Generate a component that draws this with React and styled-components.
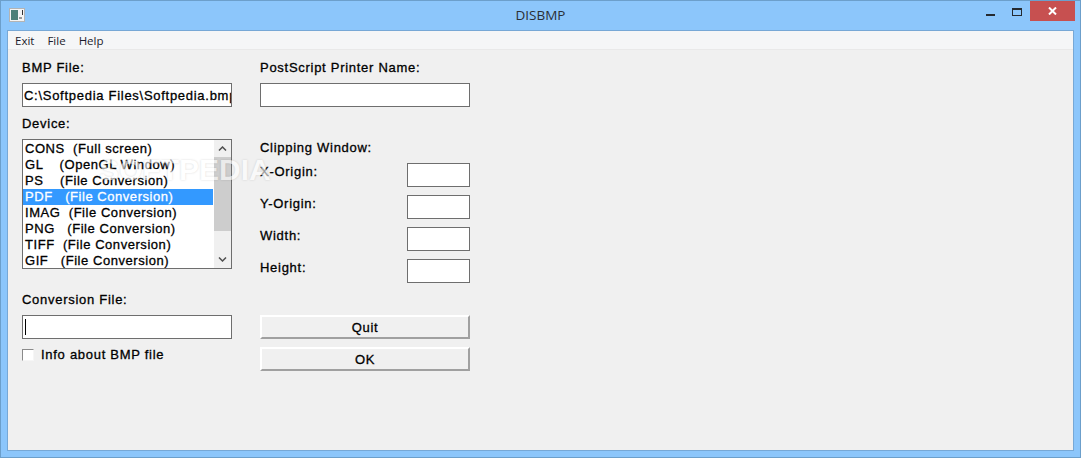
import styled, { createGlobalStyle } from 'styled-components';

const Global = createGlobalStyle`
  html, body { margin: 0; padding: 0; overflow: hidden; }
`;

const Frame = styled.div`
  box-sizing: border-box;
  width: 1081px;
  height: 458px;
  background: #8cc6fb;
  border: 1px solid #6c9fcb;
  display: flex;
  flex-direction: column;
  padding: 0 6px 6px 6px;
`;

const TitleBar = styled.div`
  height: 29px;
  flex: none;
  display: grid;
  grid-template-columns: 1fr auto 1fr;
  align-items: start;
`;

const AppIcon = styled.svg`
  display: block;
  margin: 7px 0 0 2px;
`;

const Title = styled.div`
  font: 13.5px/29px "Open Sans", "Noto Sans", sans-serif;
  color: #2b2f36;
`;

const Controls = styled.div`
  display: flex;
  justify-content: flex-end;
  align-items: flex-start;
  margin-right: -1px;
`;

const ControlIcon = styled.svg`
  display: block;
  margin-top: ${p => p.$top}px;
  margin-right: ${p => p.$right}px;
`;

const CloseButton = styled.div`
  width: 45px;
  height: 20px;
  background: #c75050;
  display: flex;
  align-items: center;
  justify-content: center;
`;

const Client = styled.div`
  flex: 1;
  border: 1px solid #77a8d6;
  background: #f0f0f0;
  display: flex;
  flex-direction: column;
  position: relative;
`;

const MenuBar = styled.div`
  height: 18px;
  flex: none;
  background: #f5f6f7;
  border-bottom: 1px solid #e9e9e9;
  display: flex;
  gap: 13px;
  padding-left: 7px;
  font: 11.5px/20px "Open Sans", "Noto Sans", sans-serif;
  color: #1c1c2c;
`;

const Form = styled.div`
  display: flex;
  gap: 28px;
  padding: 9px 0 0 14px;
  font: 13px/16px "Liberation Sans", Arial, sans-serif;
  letter-spacing: 0.72px;
  color: #000;
  -webkit-text-stroke: 0.3px #000;
`;

const Column = styled.div`
  width: 210px;
  display: flex;
  flex-direction: column;
`;

const Label = styled.div`
  height: 16px;
  line-height: 18px;
  white-space: nowrap;
  margin-top: ${p => p.$top || 0}px;
  margin-bottom: 8px;
`;

const TextBox = styled.div`
  box-sizing: border-box;
  width: ${p => p.$width || 210}px;
  height: 24px;
  flex: none;
  background: #fff;
  border: 1px solid #6e6e6e;
  padding: 4px 0 0 1px;
  overflow: hidden;
  white-space: nowrap;
`;

const Caret = styled.div`
  width: 1px;
  height: 16px;
  margin: -1px 0 0 1px;
  background: #000;
`;

const ListBox = styled.div`
  box-sizing: border-box;
  height: 130px;
  background: #fff;
  border: 1px solid #6e6e6e;
  display: flex;
`;

const Items = styled.div`
  width: 191px;
  padding-top: 1px;
  overflow: hidden;
  letter-spacing: 0.55px;
`;

const Item = styled.div`
  height: 16px;
  padding-left: 2px;
  white-space: pre;
  background: ${p => (p.$selected ? '#3399ff' : 'transparent')};
  color: ${p => (p.$selected ? '#fff' : '#000')};
  -webkit-text-stroke: 0.3px ${p => (p.$selected ? '#fff' : '#000')};
`;

const ScrollBar = styled.div`
  width: 17px;
  margin-left: 1px;
  background: #f0f0f0;
  display: flex;
  flex-direction: column;
  align-items: center;
`;

const Arrow = styled.svg`
  display: block;
  flex: none;
  margin: 6px 0;
`;

const Thumb = styled.div`
  width: 100%;
  height: 75px;
  background: #cdcdcd;
  margin-bottom: 20px;
`;

const CheckRow = styled.div`
  display: flex;
  align-items: center;
  gap: 7px;
  margin-top: 9px;
  height: 14px;
  line-height: 16px;
`;

const CheckBox = styled.div`
  box-sizing: border-box;
  width: 12px;
  height: 12px;
  background: #fff;
  border: 1px solid #8a8a8a;
  border-right-color: #f6f6f6;
  border-bottom-color: #f6f6f6;
`;

const ClipRow = styled.div`
  display: flex;
  justify-content: space-between;
  margin-bottom: 8px;
`;

const ClipLabel = styled.div`
  height: 16px;
  line-height: 18px;
`;

const Button = styled.div`
  box-sizing: border-box;
  height: 24px;
  margin-top: ${p => p.$top || 0}px;
  margin-bottom: 8px;
  background: #f0f0f0;
  border: 2px solid;
  border-color: #fff #a0a0a0 #a0a0a0 #fff;
  text-align: center;
  line-height: 21px;
`;

const Watermark = styled.div`
  position: absolute;
  left: 91px;
  top: 119px;
  font: bold 30px/40px "Liberation Sans", Arial, sans-serif;
  color: #fff;
  opacity: 0.6;
  text-shadow: 0 0 2px rgba(0, 0, 0, 0.25);
  pointer-events: none;
`;

const DEVICES = [
  'CONS  (Full screen)',
  'GL    (OpenGL Window)',
  'PS    (File Conversion)',
  'PDF   (File Conversion)',
  'IMAG  (File Conversion)',
  'PNG   (File Conversion)',
  'TIFF  (File Conversion)',
  'GIF   (File Conversion)',
];

const CLIP_FIELDS = ['X-Origin:', 'Y-Origin:', 'Width:', 'Height:'];

const App = () => (
  <Frame>
    <Global />
    <TitleBar>
      <AppIcon width="16" height="14" viewBox="0 0 16 14">
        <rect x="0.5" y="0.5" width="15" height="13" fill="#f4f4f4" stroke="#b4b4b4" />
        <rect x="2" y="2" width="7" height="10" fill="#4d8078" />
        <rect x="10" y="9" width="3" height="2" fill="#9a9a9a" />
        <rect x="13" y="2" width="1" height="5" fill="#333" />
      </AppIcon>
      <Title>DISBMP</Title>
      <Controls>
        <ControlIcon $top={13} $right={17} width="9" height="2" viewBox="0 0 9 2">
          <rect width="9" height="2" fill="#252a30" />
        </ControlIcon>
        <ControlIcon $top={7} $right={8} width="10" height="8" viewBox="0 0 10 8">
          <rect x="0.5" y="0.5" width="9" height="7" fill="none" stroke="#252a30" />
          <rect width="10" height="2" fill="#252a30" />
        </ControlIcon>
        <CloseButton>
          <svg width="9" height="8" viewBox="0 0 9 8">
            <path d="M1 0.5 L8 7.5 M8 0.5 L1 7.5" stroke="#fff" strokeWidth="2" fill="none" />
          </svg>
        </CloseButton>
      </Controls>
    </TitleBar>
    <Client>
      <MenuBar>
        <span>Exit</span>
        <span>File</span>
        <span>Help</span>
      </MenuBar>
      <Form>
        <Column>
          <Label>BMP File:</Label>
          <TextBox>C:\Softpedia Files\Softpedia.bmp</TextBox>
          <Label $top={8}>Device:</Label>
          <ListBox>
            <Items>
              {DEVICES.map((d, i) => (
                <Item key={d} $selected={i === 3}>{d}</Item>
              ))}
            </Items>
            <ScrollBar>
              <Arrow width="9" height="5" viewBox="0 0 9 5">
                <path d="M1 4.5 L4.5 1 L8 4.5" stroke="#505050" strokeWidth="1.5" fill="none" />
              </Arrow>
              <Thumb />
              <Arrow width="9" height="5" viewBox="0 0 9 5">
                <path d="M1 0.5 L4.5 4 L8 0.5" stroke="#505050" strokeWidth="1.5" fill="none" />
              </Arrow>
            </ScrollBar>
          </ListBox>
          <Label $top={22}>Conversion File:</Label>
          <TextBox><Caret /></TextBox>
          <CheckRow>
            <CheckBox />
            <span>Info about BMP file</span>
          </CheckRow>
        </Column>
        <Column>
          <Label>PostScript Printer Name:</Label>
          <TextBox />
          <Label $top={32}>Clipping Window:</Label>
          {CLIP_FIELDS.map(f => (
            <ClipRow key={f}>
              <ClipLabel>{f}</ClipLabel>
              <TextBox $width={63} />
            </ClipRow>
          ))}
          <Button $top={24}>Quit</Button>
          <Button>OK</Button>
        </Column>
      </Form>
      <Watermark>SOFTPEDIA</Watermark>
    </Client>
  </Frame>
);

export default App;
